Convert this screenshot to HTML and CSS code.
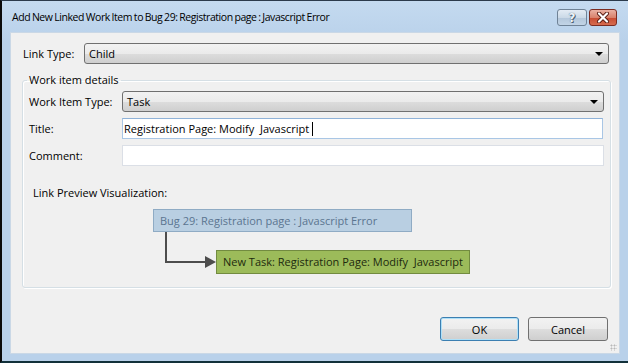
FILE: index.html
```html
<!DOCTYPE html>
<html lang="en">
<head>
    <meta charset="UTF-8">
    <meta name="viewport" content="width=device-width, initial-scale=1.0">
    <title>Add New Linked Work Item</title>
    <link rel="stylesheet" href="styles.css">
</head>
<body>
    <div class="window">
        <div class="titlebar">
            <span class="title">Add New Linked Work Item to Bug 29: Registration page : Javascript Error</span>
            <div class="caption-buttons">
                <button class="cap-btn help">?</button>
                <button class="cap-btn close">
                    <svg width="14" height="11" viewBox="0 0 14 11">
                        <path d="M3 1.5 L11 9.5 M11 1.5 L3 9.5" stroke="#5a1d14" stroke-width="4" stroke-linecap="round"/>
                        <path d="M3 1.5 L11 9.5 M11 1.5 L3 9.5" stroke="#ffffff" stroke-width="2.2" stroke-linecap="round"/>
                    </svg>
                </button>
            </div>
        </div>

        <div class="client">
            <div class="link-row">
                <label class="link-label">Link Type:</label>
                <div class="combo">Child<span class="arrow"></span></div>
            </div>

            <fieldset class="group">
                <legend>Work item details</legend>
                <div class="fields">
                    <label>Work Item Type:</label>
                    <div class="combo">Task<span class="arrow"></span></div>
                    <label>Title:</label>
                    <div class="textbox focused">Registration Page: Modify&nbsp; Javascript<span class="caret"></span></div>
                    <label>Comment:</label>
                    <div class="textbox"></div>
                </div>

                <div class="preview-label">Link Preview Visualization:</div>
                <div class="preview">
                    <div class="node bug">Bug 29: Registration page : Javascript Error</div>
                    <div class="child-row">
                        <svg class="connector" width="63" height="42" viewBox="0 0 63 42">
                            <path d="M13 0 V30 H53" fill="none" stroke="#4d4d4d" stroke-width="2"/>
                            <polygon points="52,24 63,30 52,36" fill="#4d4d4d"/>
                        </svg>
                        <div class="node task">New Task: Registration Page: Modify&nbsp; Javascript</div>
                    </div>
                </div>
            </fieldset>

            <div class="actions">
                <button class="btn default">OK</button>
                <button class="btn">Cancel</button>
            </div>
            <div class="grip"></div>
        </div>
    </div>
</body>
</html>
```

FILE: styles.css
```css
body {
    margin: 0;
    font-family: "Open Sans", "Noto Sans", sans-serif;
    font-size: 11px;
    color: #000;
    background: #ffffff;
}
.window {
    width: 628px;
    height: 363px;
    box-sizing: border-box;
    border-left: 2px solid #0b0b0b;
    border-top: 1px solid #2b3a4c;
    border-bottom: 2px solid #12313a;
    background: linear-gradient(#c4daf0, #b9d1ea 40px, #b9d1ea);
    padding: 0 8px 7px 8px;
    display: flex;
    flex-direction: column;
}
.titlebar {
    height: 31px;
    display: flex;
    align-items: center;
    padding: 0 3px 0 2px;
}
.title {
    flex: 1;
    font-size: 10.5px;
    letter-spacing: -0.45px;
    word-spacing: -0.5px;
    color: #000;
}
.caption-buttons {
    display: flex;
    gap: 2px;
    align-self: flex-start;
    margin-top: 8px;
}
.cap-btn {
    height: 17px;
    padding: 0;
    border-radius: 3px;
    display: flex;
    align-items: center;
    justify-content: center;
    font-family: "DejaVu Sans", sans-serif;
    font-weight: bold;
}
.help {
    width: 30px;
    border: 1px solid #6f8296;
    background: linear-gradient(#e3ebf4, #cbd9e7 50%, #b3c6da 51%, #c2d4e6);
    color: #eef3f8;
    font-size: 12px;
    text-shadow: 0 0 1px #34475c, 1px 1px 0 #50647a;
}
.close {
    width: 28px;
    border: 1px solid #7c2c21;
    background: linear-gradient(#eab1a3, #d9826c 50%, #c74a31 51%, #d66c4f);
}
.client {
    flex: 1;
    position: relative;
    background: #f0f0f0;
    border: 1px solid #cad8e6;
    padding: 10px 8px 0 11px;
}
.link-row {
    display: flex;
    align-items: center;
    margin-right: 2px;
}
.link-label {
    width: 61px;
    padding-left: 1px;
}
.combo {
    flex: 1;
    height: 21px;
    box-sizing: border-box;
    border: 1px solid #707070;
    border-radius: 3px;
    background: linear-gradient(#f2f2f2, #ebebeb 50%, #dddddd 51%, #cfcfcf);
    display: flex;
    align-items: center;
    padding: 0 5px 0 4px;
}
.arrow {
    margin-left: auto;
    width: 0;
    height: 0;
    border-left: 4px solid transparent;
    border-right: 4px solid transparent;
    border-top: 4px solid #000;
}
.group {
    margin: 8px 0 0 0;
    border: 1px solid #d5dfe5;
    border-radius: 3px;
    box-shadow: inset 1px 1px 0 #ffffff, 1px 1px 0 #ffffff;
    padding: 3px 6px 13px 6px;
}
.group legend {
    padding: 0 2px;
    margin-left: -2px;
    line-height: 16px;
}
.fields {
    display: grid;
    grid-template-columns: 93px 1fr;
    grid-auto-rows: 21px;
    row-gap: 6px;
    align-items: center;
}
.fields .combo {
    height: 21px;
}
.textbox {
    height: 21px;
    box-sizing: border-box;
    background: #ffffff;
    border: 1px solid #dbdfe6;
    display: flex;
    align-items: center;
    padding-left: 1px;
    white-space: pre;
}
.textbox.focused {
    border-color: #a9c6e5;
    border-top-color: #8fb2d8;
    margin-right: 1px;
}
.caret {
    width: 1px;
    height: 14px;
    background: #000;
    margin-left: 3px;
}
.preview-label {
    margin-top: 19px;
    padding-left: 4px;
    line-height: 16px;
}
.preview {
    margin: 8px 0 0 124px;
}
.node {
    box-sizing: border-box;
    padding-left: 6px;
    white-space: pre;
}
.bug {
    width: 259px;
    height: 23px;
    line-height: 21px;
    border: 1px solid #8fabc4;
    background: #b9cfe2;
    color: #5b7590;
}
.child-row {
    display: flex;
    align-items: flex-end;
}
.connector {
    display: block;
    flex: none;
}
.task {
    width: 254px;
    height: 24px;
    line-height: 22px;
    border: 1px solid #728b40;
    background: #9cbb5a;
    color: #1d2a0e;
}
.actions {
    display: flex;
    justify-content: flex-end;
    gap: 9px;
    margin: 29px 3px 0 0;
}
.btn {
    height: 24px;
    width: 80px;
    font-family: "Open Sans", "Noto Sans", sans-serif;
    font-size: 11px;
    border: 1px solid #707070;
    border-radius: 3px;
    background: linear-gradient(#f2f2f2, #ebebeb 50%, #dddddd 51%, #cfcfcf);
    padding: 0;
}
.btn.default {
    width: 79px;
    border-color: #3c7fb1;
    box-shadow: inset 0 0 0 1px #aee0f8;
}
.grip {
    position: absolute;
    right: 2px;
    bottom: 2px;
    width: 7px;
    height: 7px;
    background:
        radial-gradient(circle, #b8b8b8 0.8px, transparent 1.2px) 0 0 / 3px 3px;
}
```
